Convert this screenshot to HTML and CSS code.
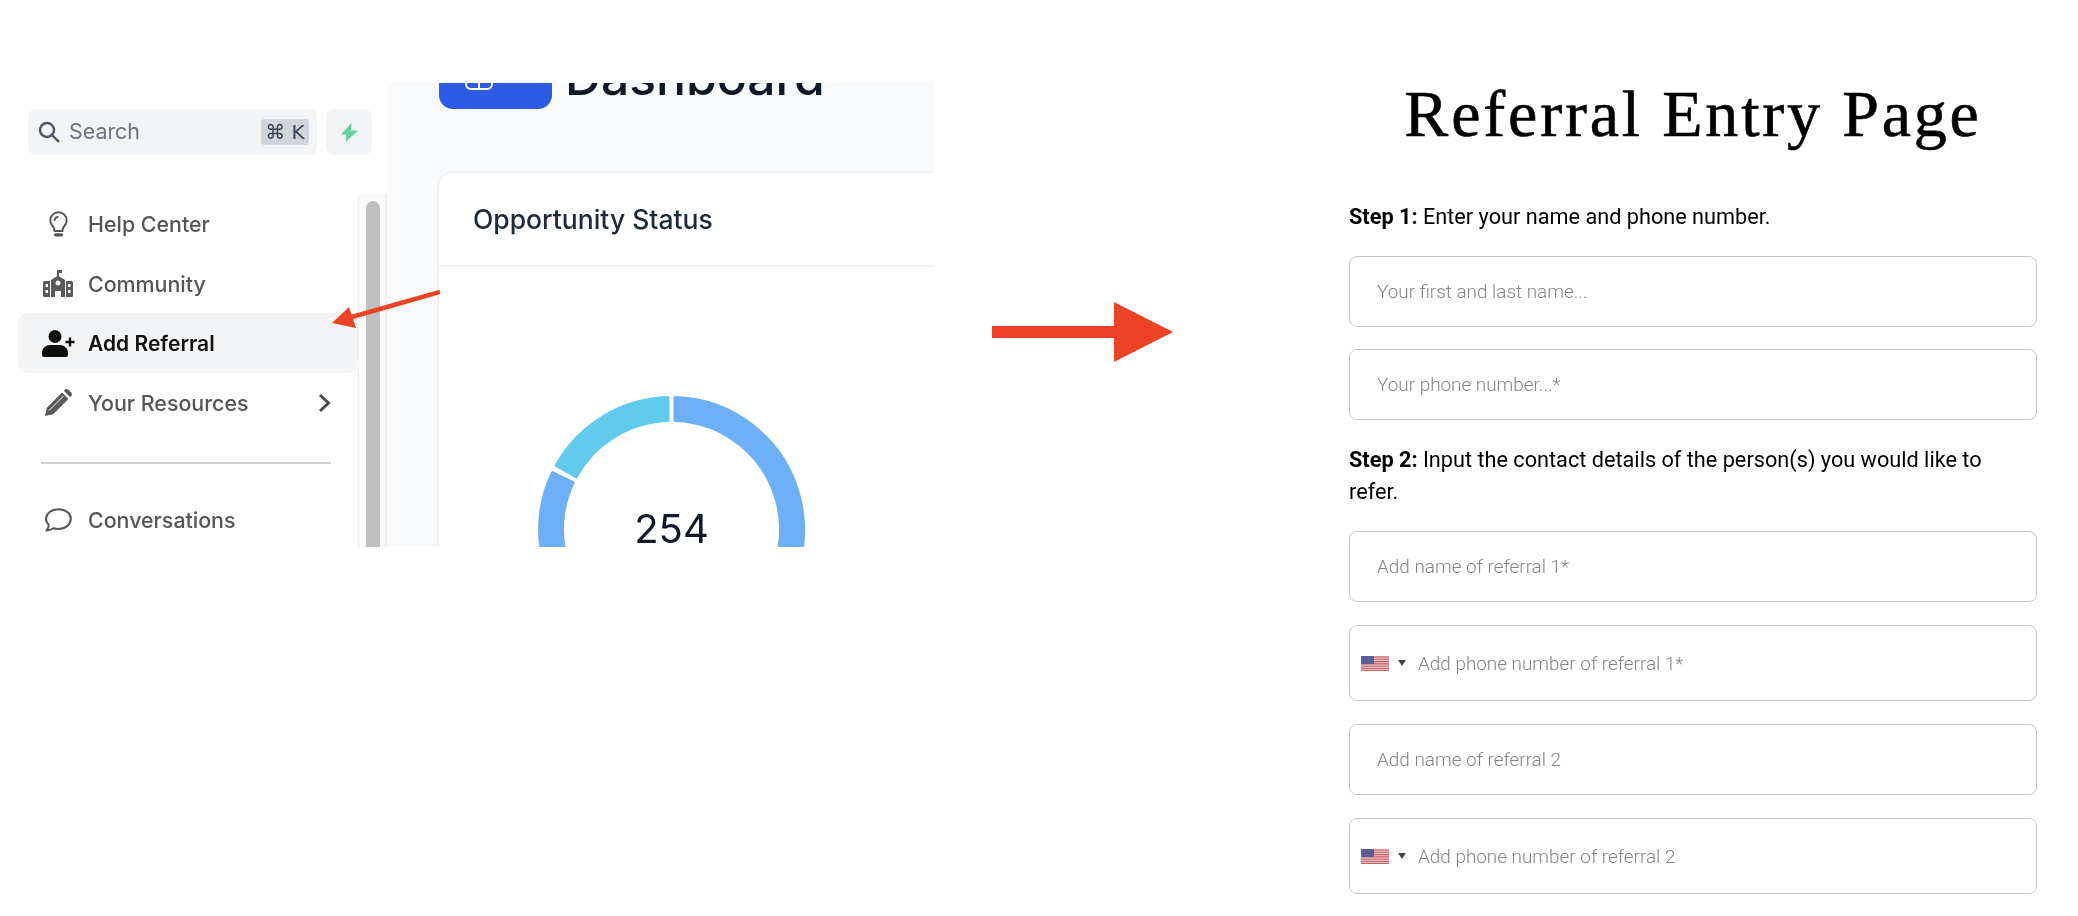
FILE: index.html
```html
<!DOCTYPE html>
<html lang="en">
<head>
<meta charset="utf-8">
<title>Referral Entry Page</title>
<link rel="stylesheet" href="styles.css">
</head>
<body>
<div class="page">
  <section class="shot">
    <aside class="sidebar">
      <div class="search-row">
        <div class="search">
          <svg class="search-icon" viewBox="0 0 22 22"><circle cx="9" cy="9" r="7"/><path d="M14 14l7 7"/></svg>
          <span class="search-label">Search</span>
          <kbd class="kbd">⌘ K</kbd>
        </div>
        <div class="bolt">
          <svg class="bolt-icon" viewBox="0 0 17 19"><path d="M10.5 0 L0 11.5 H5.5 L4.5 19 L17 7.5 H10 Z"/></svg>
        </div>
      </div>
      <div class="nav-wrap">
        <nav class="nav">
          <a class="row">
            <span class="slot"><svg class="ic-bulb" viewBox="0 0 19 26"><path class="line" d="M9.5 1.2a8.2 8.2 0 0 0-8.2 8.2c0 3 1.5 5 3 6.6 1 1.1 1.2 2.6 1.2 4h8c0-1.4.2-2.9 1.2-4 1.5-1.6 3-3.6 3-6.6a8.2 8.2 0 0 0-8.2-8.2z"/><path class="line" d="M5.5 9a4 4 0 0 1 3-3"/><path class="thick" d="M6.5 23.8h6"/></svg></span>
            <span>Help Center</span>
          </a>
          <a class="row">
            <span class="slot"><svg class="ic-school" viewBox="0 0 30 27"><path class="solid" fill-rule="evenodd" d="M14 0h5v3h-3v3.200l6 3.800v17h-4v-6h-6v6H8V10l6-3.800zM15 10.500a2.500 2.500 0 1 0 .01 0zM1.500 11H7v16H1.500A1.500 1.500 0 0 1 0 25.500v-13A1.500 1.500 0 0 1 1.500 11zM2.500 14v3h2.500v-3zM2.500 20v3h2.500v-3zM23 11h5.500a1.500 1.500 0 0 1 1.500 1.500v13a1.500 1.500 0 0 1-1.500 1.500H23zM25 14v3h2.500v-3zM25 20v3h2.500v-3z"/></svg></span>
            <span>Community</span>
          </a>
          <a class="row row-active">
            <span class="slot"><svg class="ic-user" viewBox="0 0 33 27"><circle cx="13" cy="6.500" r="6.500"/><path d="M0 25v-2c0-5 4-8 8-8h10c4 0 8 3 8 8v2a2 2 0 0 1-2 2H2a2 2 0 0 1-2-2z"/><path class="plus" d="M28 7.500v9M23.500 12h9"/></svg></span>
            <span>Add Referral</span>
          </a>
          <a class="row">
            <span class="slot"><svg class="ic-pencil" viewBox="0 0 27 27"><path class="solid" d="M0 27l1.800-8.200L17 3.600l6.400 6.400L8.200 25.200z"/><path class="solid" d="M18.800 1.800l.8-.8c1.200-1.300 3-1.300 4.200 0l2.200 2.200c1.300 1.200 1.300 3 0 4.200l-.8.800z"/><path class="cut" d="M4 21.500L18.500 7"/></svg></span>
            <span class="row-label">Your Resources</span>
            <svg class="chevron" viewBox="0 0 13 20"><path d="M2 2l8.500 8L2 18"/></svg>
          </a>
          <hr class="divider">
          <a class="row">
            <span class="slot"><svg class="ic-chat" viewBox="0 0 28 24"><path class="line" d="M14.500 1.200C7.500 1.200 2 5.500 2 10.800c0 2.400 1 4.500 2.800 6-.1 2.100-1 4-2.300 5.800 2.500-.1 5-1 7-2.400 1.600.5 3.200.7 5 .7 7 0 12.300-4.600 12.300-10.100S21.500 1.200 14.500 1.200z"/></svg></span>
            <span>Conversations</span>
          </a>
        </nav>
        <div class="track"><div class="thumb"></div></div>
      </div>
    </aside>
    <main class="main">
      <header class="dash-head">
        <div class="dash-logo">
          <svg class="dash-icon" viewBox="0 0 28 47"><rect x="1" y="1" width="26" height="45" rx="5"/><path d="M14 24v22M1 34h26"/></svg>
        </div>
        <h1 class="dash-title">Dashboard</h1>
      </header>
      <article class="card">
        <h2 class="card-title">Opportunity Status</h2>
        <div class="card-body">
          <div class="donut">
            <svg class="donut-svg" viewBox="0 0 267 267">
              <path class="seg-blue" d="M137 1.550A132 132 0 0 1 199.500 247.800L188 227.900A109 109 0 0 0 137 24.560Z"/>
              <path class="seg-cyan" d="M130 1.550A132 132 0 0 0 18.100 69.500L38.200 80.700A109 109 0 0 1 130 24.560Z"/>
              <path class="seg-blue" d="M14.400 76.700A132 132 0 0 0 67.500 247.800L79 227.900A109 109 0 0 1 35.100 86.600Z"/>
            </svg>
            <span class="donut-value">254</span>
          </div>
        </div>
      </article>
    </main>
    <svg class="pointer" viewBox="0 0 110 46"><path class="pointer-line" d="M110 7L20 32.500"/><path class="pointer-head" d="M2 38L19 22L26 43Z"/></svg>
  </section>

  <svg class="big-arrow" viewBox="0 0 181 60"><path d="M0 24H122V0L181 30L122 60V36H0Z"/></svg>

  <section class="form">
    <h1 class="form-title">Referral Entry Page</h1>
    <p class="step step-one"><b>Step 1:</b> Enter your name and phone number.</p>
    <div class="field">Your first and last name...</div>
    <div class="field field-tight">Your phone number...*</div>
    <p class="step step-two"><b>Step 2:</b> Input the contact details of the person(s) you would like to refer.</p>
    <div class="field">Add name of referral 1*</div>
    <div class="field field-tel">
      <svg class="flag" viewBox="0 0 28 15"><rect width="28" height="15" fill="#e8c4c6"/><path class="flag-stripes" d="M0 1h28M0 3.300h28M0 5.600h28M0 7.900h28M0 10.200h28M0 12.500h28M0 14.500h28"/><rect width="13" height="8" fill="#5a5f95"/></svg>
      <span class="caret"></span>
      <span>Add phone number of referral 1*</span>
    </div>
    <div class="field">Add name of referral 2</div>
    <div class="field field-tel">
      <svg class="flag" viewBox="0 0 28 15"><rect width="28" height="15" fill="#e8c4c6"/><path class="flag-stripes" d="M0 1h28M0 3.300h28M0 5.600h28M0 7.900h28M0 10.200h28M0 12.500h28M0 14.500h28"/><rect width="13" height="8" fill="#5a5f95"/></svg>
      <span class="caret"></span>
      <span>Add phone number of referral 2</span>
    </div>
  </section>
</div>
</body>
</html>
```

FILE: styles.css
```css
* { box-sizing: border-box; }
html, body { margin: 0; padding: 0; background: #fff; }
.page {
  display: flex;
  align-items: flex-start;
  width: 2078px;
  height: 916px;
  overflow: hidden;
  background: #fff;
}

/* left: cropped app screenshot */
.shot {
  position: relative;
  display: flex;
  flex: none;
  width: 934px;
  height: 464px;
  margin-top: 83px;
  overflow: hidden;
  font-family: Inter, "Liberation Sans", sans-serif;
  filter: blur(0.4px);
}
.sidebar {
  display: flex;
  flex-direction: column;
  flex: none;
  width: 387px;
  background: #fff;
}
.search-row {
  display: flex;
  gap: 9px;
  height: 111px;
  padding: 26px 0 0 28px;
}
.search {
  display: flex;
  align-items: center;
  width: 289px;
  height: 46px;
  padding: 0 8px 0 10px;
  border-radius: 8px;
  background: #f3f4f6;
}
.search-icon { width: 22px; height: 22px; fill: none; stroke: #4b5563; stroke-width: 2.4; }
.search-label { flex: 1; margin: -2px 0 0 9px; font-size: 21.400px; color: #6b7280; }
.kbd {
  width: 48px;
  height: 26px;
  border-radius: 4px;
  background: #d1d5db;
  color: #374151;
  font-family: "DejaVu Sans", sans-serif;
  font-size: 20px;
  line-height: 26px;
  text-align: center;
}
.bolt {
  display: flex;
  align-items: center;
  justify-content: center;
  width: 46px;
  height: 46px;
  border-radius: 8px;
  background: #f3f4f6;
}
.bolt-icon { width: 17px; height: 19px; fill: #5fd19c; }
.nav-wrap { display: flex; flex: 1; min-height: 0; }
.nav { flex: none; width: 358px; padding-left: 18px; }
.row {
  display: flex;
  align-items: center;
  height: 59.700px;
  padding: 0 27px 0 23px;
  border-radius: 10px;
  color: #555;
  font-size: 21.400px;
  font-weight: 500;
}
.row-active { background: #f3f4f6; color: #111; font-size: 21px; font-weight: 600; }
.row-label { flex: 1; }
.slot {
  display: flex;
  align-items: center;
  justify-content: center;
  flex: none;
  width: 34px;
  margin-right: 13px;
}
.line { fill: none; stroke: #555; stroke-width: 2; stroke-linecap: round; stroke-linejoin: round; }
.thick { fill: none; stroke: #555; stroke-width: 3.2; stroke-linecap: round; }
.solid { fill: #5a5a5a; }
.cut { fill: none; stroke: #fff; stroke-width: 1; }
.ic-bulb { width: 19px; height: 26px; }
.ic-school { width: 30px; height: 27px; }
.ic-user { width: 33px; height: 27px; fill: #0d0d0d; }
.plus { fill: none; stroke: #0d0d0d; stroke-width: 2.4; }
.ic-pencil { width: 27px; height: 27px; }
.ic-chat { width: 28px; height: 24px; }
.chevron { flex: none; width: 13px; height: 20px; fill: none; stroke: #4a4a4a; stroke-width: 3; }
.divider {
  height: 2px;
  margin: 29px 0 26px 23px;
  width: 290px;
  border: 0;
  background: #d1d0d6;
}
.track {
  flex: none;
  width: 29px;
  padding: 7px 5px 0 7px;
  border-left: 1px solid #efefef;
  border-right: 2px solid #f0f0f0;
  background: #fafafa;
}
.thumb {
  width: 14px;
  height: 400px;
  border-radius: 7px;
  background: #c0c0c0;
}

.main {
  flex: none;
  width: 547px;
  padding-left: 52px;
  background: #f9fafc;
}
.dash-head {
  display: flex;
  gap: 13px;
  align-items: flex-end;
  height: 85px;
  margin-top: -59px;
}
.dash-logo {
  display: flex;
  align-items: flex-end;
  flex: none;
  width: 113px;
  height: 85px;
  padding: 0 0 19px 26px;
  border-radius: 0 0 14px 14px;
  background: #2d5be3;
}
.dash-icon { width: 28px; height: 47px; fill: none; stroke: #fff; stroke-width: 2; }
.dash-title {
  margin: 0 0 2px;
  color: #111827;
  font-size: 49.800px;
  font-weight: 500;
  line-height: 60px;
}
.card {
  width: 640px;
  height: 420px;
  margin-top: 64px;
  border-radius: 14px 0 0 0;
  background: #fff;
  box-shadow: 0 0 3px rgba(17, 24, 39, 0.12);
}
.card-title {
  height: 94px;
  margin: 0;
  padding: 0 0 0 34px;
  border-bottom: 2px solid #f3f4f6;
  color: #1f2937;
  font-size: 26.500px;
  font-weight: 500;
  line-height: 93px;
}
.card-body { padding: 129px 0 0 99px; }
.donut { position: relative; width: 267px; height: 267px; }
.donut-svg { display: block; width: 267px; height: 267px; stroke-width: 3; stroke-linejoin: round; }
.seg-blue { fill: #6eb0f7; stroke: #6eb0f7; }
.seg-cyan { fill: #62cbeb; stroke: #62cbeb; }
.donut-value {
  position: absolute;
  left: 0;
  right: 0;
  top: 108px;
  color: #111827;
  font-size: 40px;
  line-height: 50px;
  text-align: center;
}
.pointer {
  position: absolute;
  left: 330px;
  top: 202px;
  width: 110px;
  height: 46px;
  overflow: hidden;
}
.pointer-line { fill: none; stroke: #ed4324; stroke-width: 4.500; }
.pointer-head { fill: #ed4324; }

/* centre arrow */
.big-arrow {
  flex: none;
  width: 181px;
  height: 60px;
  margin: 302px 0 0 58px;
  fill: #ed4324;
}

/* right: form */
.form {
  flex: none;
  width: 688px;
  margin-left: 176px;
  color: #000;
  font-family: Roboto, "Liberation Sans", sans-serif;
  filter: blur(0.3px);
}
.form-title {
  margin: 73px 0 0;
  color: #000;
  font-family: "Liberation Serif", serif;
  font-size: 66px;
  font-weight: 400;
  letter-spacing: 2.800px;
  line-height: 82px;
  text-align: center;
  -webkit-text-stroke: 0.6px #000;
}
.step {
  margin: 0;
  font-size: 21.700px;
  line-height: 32px;
}
.step b { font-weight: 700; }
.step-one { margin-top: 46px; }
.step-two { margin: 24px 0 1px; max-width: 660px; }
.field {
  display: flex;
  align-items: center;
  height: 71px;
  margin-top: 23px;
  padding-left: 27px;
  border: 1.500px solid #c6c6c6;
  border-radius: 8px;
  color: #858585;
  font-size: 18.900px;
  font-weight: 300;
}
.field-tight { margin-top: 22px; }
.field-tel { height: 76px; padding-left: 11px; }
.flag { flex: none; width: 28px; height: 15px; }
.flag-stripes { fill: none; stroke: #c85f66; stroke-width: 1.100; }
.caret {
  flex: none;
  width: 0;
  height: 0;
  margin: 0 12px 0 9px;
  border-left: 4px solid transparent;
  border-right: 4px solid transparent;
  border-top: 6px solid #444;
}
```
